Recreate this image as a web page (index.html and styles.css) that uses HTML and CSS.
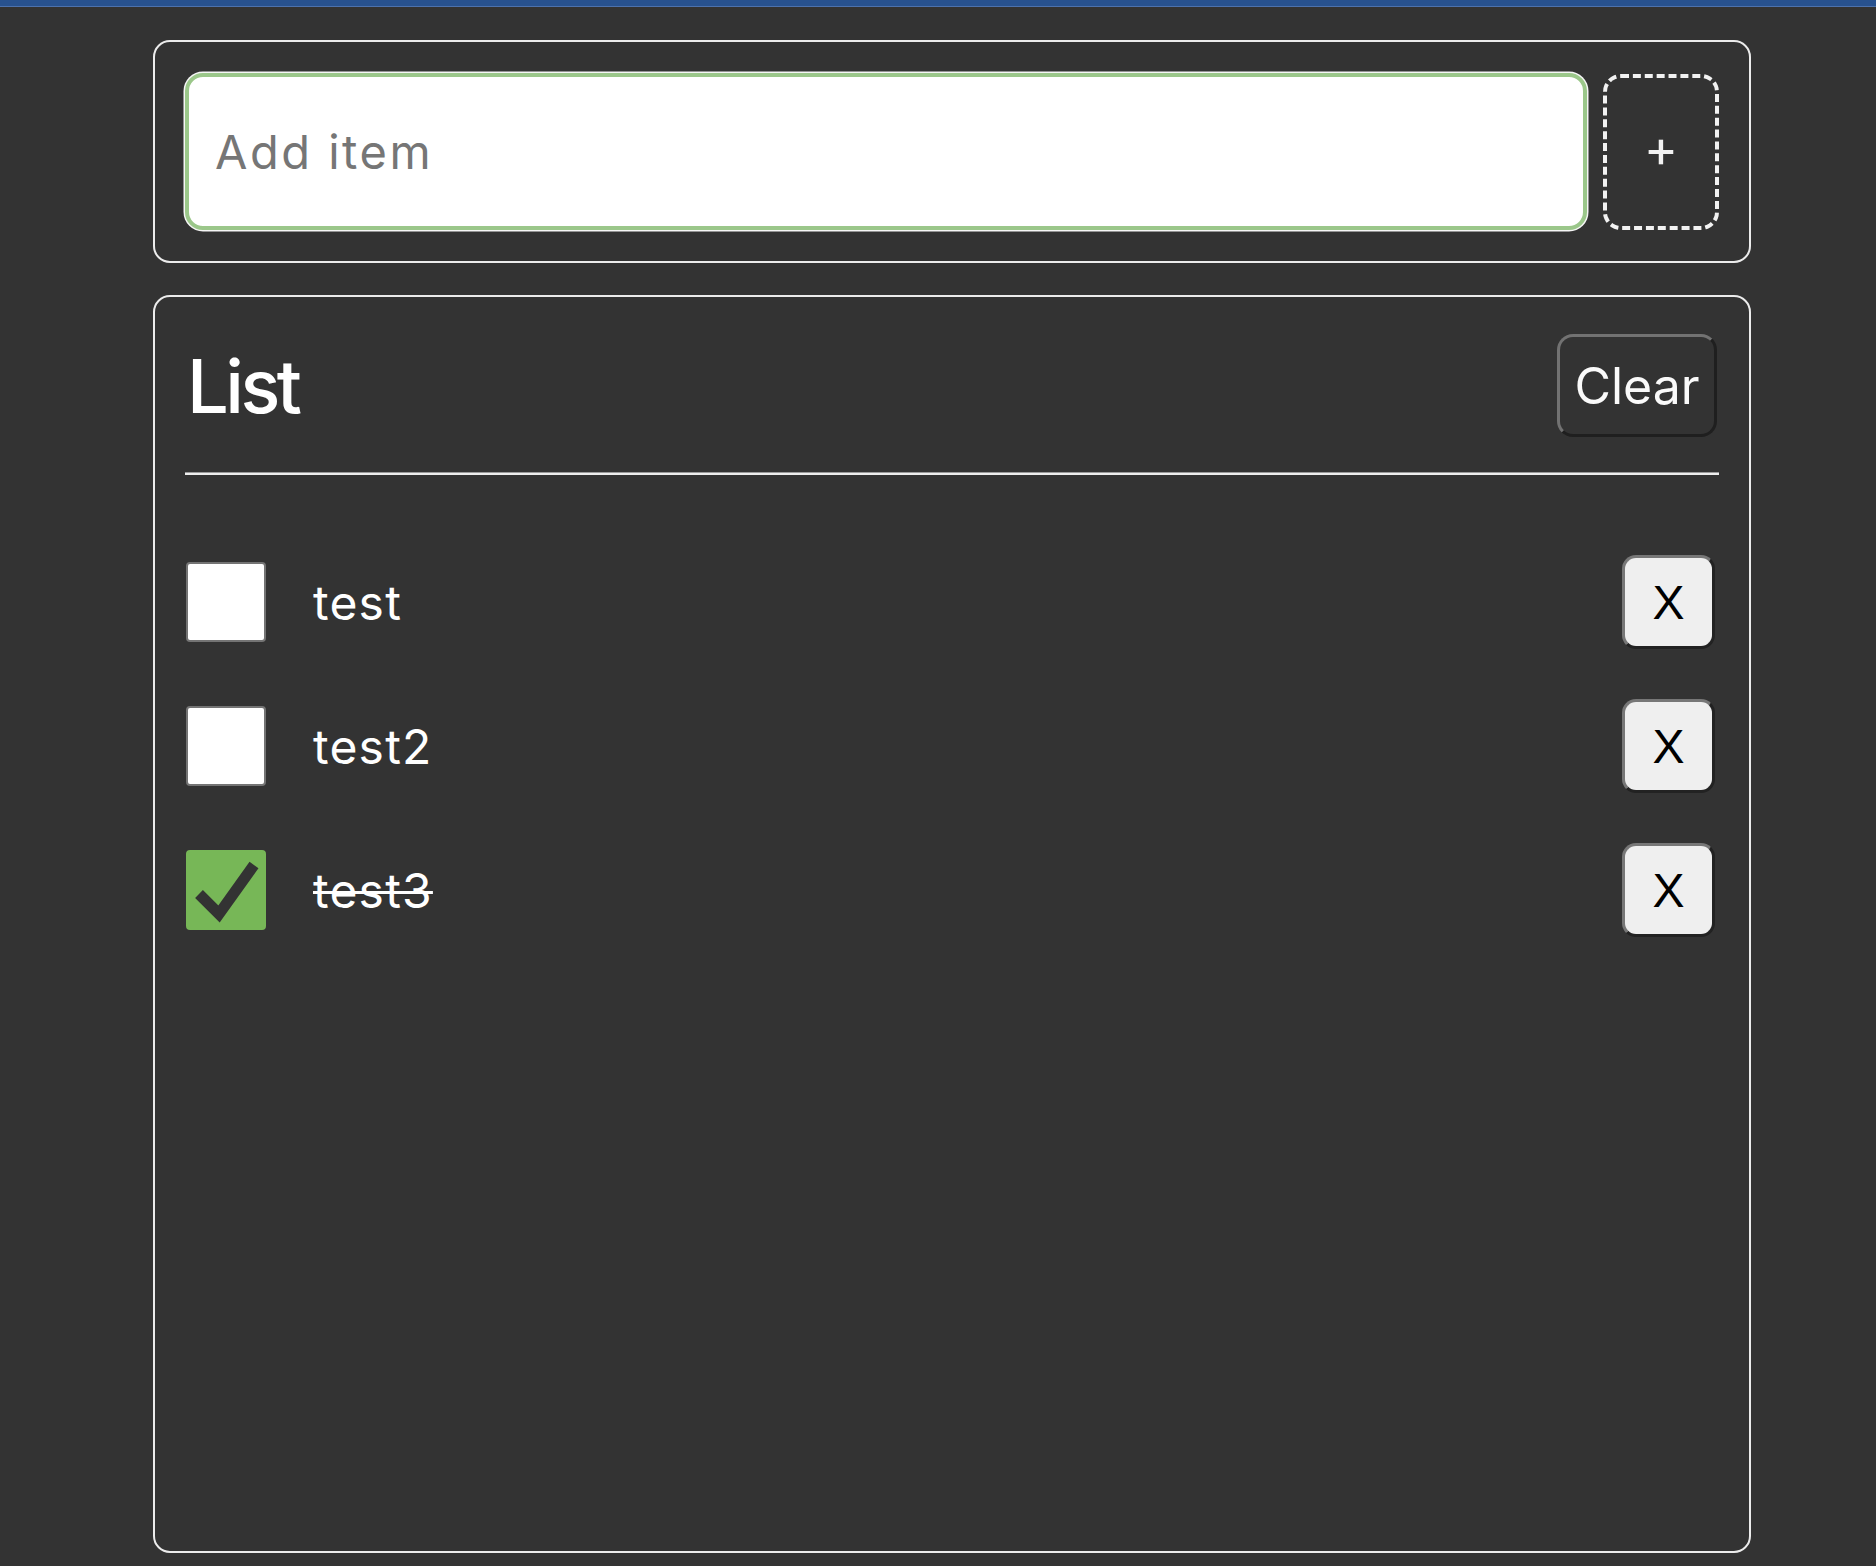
FILE: index.html
```html
<!DOCTYPE html>
<html lang="en">
<head>
<meta charset="utf-8">
<title>List</title>
<link rel="stylesheet" href="styles.css">
</head>
<body>
<div class="topbar"></div>
<main class="wrap">
  <section class="card add-card">
    <input class="add-input" type="text" placeholder="Add item">
    <button class="add-btn" type="button">+</button>
  </section>
  <section class="card list-card">
    <header class="list-head">
      <h1 class="list-title">List</h1>
      <button class="clear-btn" type="button">Clear</button>
    </header>
    <hr class="divider">
    <ul class="items">
      <li class="item">
        <span class="check"></span>
        <span class="label">test</span>
        <button class="del-btn" type="button">X</button>
      </li>
      <li class="item">
        <span class="check"></span>
        <span class="label">test2</span>
        <button class="del-btn" type="button">X</button>
      </li>
      <li class="item done">
        <span class="check checked">
          <svg viewBox="0 0 80 80" width="80" height="80" aria-hidden="true"><polyline points="13,44 33,64 68,15" fill="none" stroke="#333" stroke-width="11"/></svg>
        </span>
        <span class="label">test3</span>
        <button class="del-btn" type="button">X</button>
      </li>
    </ul>
  </section>
</main>
</body>
</html>
```
FILE: styles.css
```css
* { box-sizing: border-box; }
html, body { margin: 0; padding: 0; }
body {
  background: #333333;
  font-family: Inter, "Noto Sans", sans-serif;
  color: #fff;
  width: 1876px;
  height: 1566px;
  overflow: hidden;
}
.topbar {
  height: 7px;
  background: #28528f;
  border-bottom: 1px solid #4d72ad;
}
.wrap {
  margin-left: 153px;
  width: 1598px;
  padding-top: 33px;
}
.card {
  border: 2px solid #ececec;
  border-radius: 17px;
}
.add-card {
  display: flex;
  align-items: center;
  gap: 16px;
  padding: 31px 30px 31px 30px;
}
.add-input {
  flex: 1;
  height: 157px;
  border: 4px solid #9bc78a;
  box-shadow: 0 0 0 1.5px #f6f6f6;
  border-radius: 18px;
  background: #fff;
  padding: 0 0 0 26px;
  font-family: Inter, sans-serif;
  font-size: 47px;
  letter-spacing: 2.5px;
  color: #222;
  outline: none;
}
.add-input::placeholder { color: #767676; }
.add-btn {
  width: 116px;
  height: 156px;
  border: 4px dashed #f2f2f2;
  border-radius: 18px;
  background: transparent;
  color: #f2f2f2;
  font-family: Inter, sans-serif;
  font-size: 52px;
  font-weight: 400;
  padding: 0 0 6px;
}
.list-card {
  margin-top: 32px;
  height: 1258px;
  padding: 37px 30px 30px 30px;
}
.list-head {
  display: flex;
  align-items: center;
  justify-content: space-between;
}
.list-title {
  margin: 0;
  font-family: Inter, sans-serif;
  font-weight: 500;
  font-size: 74px;
  letter-spacing: -3.5px;
  line-height: 1;
  padding-left: 2px;
}
.clear-btn {
  width: 160px;
  height: 103px;
  margin-right: 2px;
  background: #333;
  color: #fafafa;
  border: 3px solid;
  border-color: #727272 #1f1f1f #1f1f1f #727272;
  border-radius: 16px;
  font-family: Inter, sans-serif;
  font-size: 50px;
  padding: 0;
}
.divider {
  margin: 35px 0 0 0;
  height: 0;
  border: 0;
  border-top: 1px solid #9a9a9a;
  border-bottom: 2px solid #eeeeee;
}
.items {
  list-style: none;
  margin: 80px 0 0 0;
  padding: 0;
  display: flex;
  flex-direction: column;
  gap: 50px;
}
.item {
  display: flex;
  align-items: center;
  height: 94px;
}
.check {
  width: 80px;
  height: 80px;
  flex: none;
  margin-left: 1px;
  background: #fff;
  border: 2px solid #747474;
  border-radius: 4px;
  position: relative;
}
.check.checked {
  background: #77b757;
  border-color: #77b757;
}
.check svg {
  position: absolute;
  left: -2px;
  top: -2px;
}
.label {
  margin-left: 47px;
  flex: 1;
  font-family: Inter, sans-serif;
  font-size: 48px;
  letter-spacing: 1.2px;
  color: #fff;
}
.done .label {
  text-decoration: line-through;
  text-decoration-thickness: 3px;
}
.del-btn {
  width: 93px;
  height: 94px;
  margin-right: 4px;
  background: #efefef;
  color: #000;
  border: 3px solid;
  border-color: #777 #222 #222 #777;
  border-radius: 14px;
  font-family: "Liberation Sans", Arial, sans-serif;
  font-size: 48px;
  padding: 0;
}
```
